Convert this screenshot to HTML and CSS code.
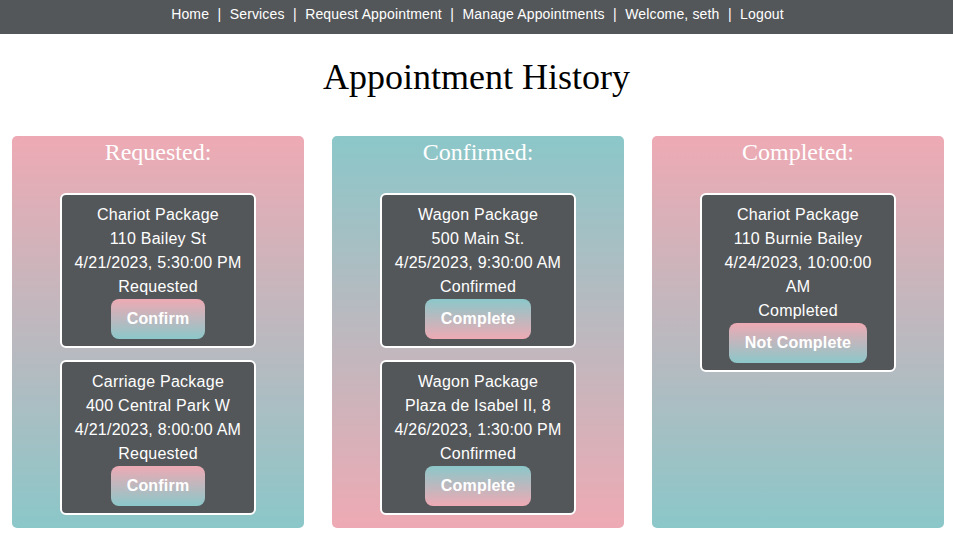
FILE: index.html
```html
<!DOCTYPE html>
<html>
<head>
<meta charset="utf-8">
<link rel="stylesheet" href="styles.css">
</head>
<body>
<nav class="nav">
  <a>Home</a><span class="sep">|</span><a>Services</a><span class="sep">|</span><a>Request Appointment</a><span class="sep">|</span><a>Manage Appointments</a><span class="sep">|</span><a>Welcome, seth</a><span class="sep">|</span><a>Logout</a>
</nav>
<h1 class="title">Appointment History</h1>
<main class="columns">
  <section class="col col-pt">
    <h2 class="col-title">Requested:</h2>
    <div class="card">
      <div>Chariot Package</div>
      <div>110 Bailey St</div>
      <div>4/21/2023, 5:30:00 PM</div>
      <div>Requested</div>
      <button class="btn btn-pt">Confirm</button>
    </div>
    <div class="card">
      <div>Carriage Package</div>
      <div>400 Central Park W</div>
      <div>4/21/2023, 8:00:00 AM</div>
      <div>Requested</div>
      <button class="btn btn-pt">Confirm</button>
    </div>
  </section>
  <section class="col col-tp">
    <h2 class="col-title">Confirmed:</h2>
    <div class="card">
      <div>Wagon Package</div>
      <div>500 Main St.</div>
      <div>4/25/2023, 9:30:00 AM</div>
      <div>Confirmed</div>
      <button class="btn btn-tp">Complete</button>
    </div>
    <div class="card">
      <div>Wagon Package</div>
      <div>Plaza de Isabel II, 8</div>
      <div>4/26/2023, 1:30:00 PM</div>
      <div>Confirmed</div>
      <button class="btn btn-tp">Complete</button>
    </div>
  </section>
  <section class="col col-pt">
    <h2 class="col-title">Completed:</h2>
    <div class="card">
      <div>Chariot Package</div>
      <div>110 Burnie Bailey</div>
      <div>4/24/2023, 10:00:00 AM</div>
      <div>Completed</div>
      <button class="btn btn-pt">Not Complete</button>
    </div>
  </section>
</main>
</body>
</html>
```
FILE: styles.css
```css
html, body {
  margin: 0;
  padding: 0;
  background: #ffffff;
}
body {
  font-family: "Times New Roman", "Liberation Serif", serif;
}
.nav {
  height: 34px;
  background: #54575a;
  display: flex;
  justify-content: center;
  align-items: center;
  padding-bottom: 6px;
  padding-left: 2px;
  box-sizing: border-box;
  font-family: "Liberation Sans", Arial, sans-serif;
  font-size: 14px;
  letter-spacing: 0.15px;
  color: #ffffff;
}
.nav a {
  color: #ffffff;
}
.sep {
  margin: 0 8.4px;
}
.title {
  margin: 18px 0 0;
  height: 84px;
  font-size: 36px;
  font-weight: normal;
  text-align: center;
  line-height: 50px;
  color: #000;
}
.columns {
  display: flex;
  gap: 28px;
  padding-left: 12px;
  align-items: stretch;
}
.col {
  width: 292px;
  height: 392px;
  border-radius: 5px;
  box-sizing: border-box;
  display: flex;
  flex-direction: column;
  align-items: center;
  padding-top: 2px;
}
.col-pt {
  background: linear-gradient(to bottom, #eeaab4, #8bc7c9);
}
.col-tp {
  background: linear-gradient(to bottom, #8bc7c9, #eeaab4);
}
.col-title {
  margin: 0 0 27px;
  font-size: 24px;
  font-weight: normal;
  line-height: 28px;
  color: #ffffff;
}
.card {
  width: 196px;
  box-sizing: border-box;
  background: #54575a;
  border: 2px solid #ffffff;
  border-radius: 6px;
  padding: 8px 10px 7px;
  margin-bottom: 12px;
  text-align: center;
  font-family: "Liberation Sans", Arial, sans-serif;
  font-size: 16px;
  line-height: 24px;
  letter-spacing: 0.25px;
  color: #ffffff;
  display: flex;
  flex-direction: column;
  align-items: center;
}
.btn {
  border: none;
  border-radius: 8px;
  padding: 8px 16px;
  font-family: "Liberation Sans", Arial, sans-serif;
  font-size: 16px;
  line-height: 24px;
  font-weight: bold;
  letter-spacing: 0.2px;
  color: #ffffff;
}
.btn-pt {
  background: linear-gradient(to bottom, #eeaab4, #8bc7c9);
}
.btn-tp {
  background: linear-gradient(to bottom, #8bc7c9, #eeaab4);
}
```
